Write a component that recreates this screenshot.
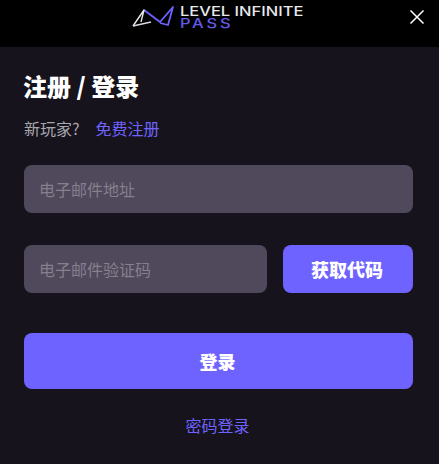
<div class="page">
  <header class="top">
    <div class="logo">
      <svg class="mark" width="43" height="24" viewBox="0 0 43 24" fill="none" aria-hidden="true">
        <path d="M12 5 L28 17 L41 2 L36 20 L28 18" stroke="#6f63ff" stroke-width="1.8" stroke-linejoin="round"/>
        <path d="M1 21 L12 5 L9 17" stroke="#e6e6ea" stroke-width="1.4" stroke-linejoin="round"/>
        <path d="M1 21 L19 17" stroke="#d8d8e0" stroke-width="1.6"/>
      </svg>
      <div class="word">
        <span class="w1">LEVEL INFINITE</span>
        <span class="w2">PASS</span>
      </div>
    </div>
    <button class="close" aria-label="关闭">
      <svg width="16" height="16" viewBox="0 0 16 16" fill="none">
        <path d="M1.5 1.5 L14.5 14.5 M14.5 1.5 L1.5 14.5" stroke="#fff" stroke-width="1.5"/>
      </svg>
    </button>
  </header>

  <main class="body">
    <h1>注册 / 登录</h1>
    <p class="sub"><span>新玩家?</span><a href="#reg">免费注册</a></p>
    <div class="field full">电子邮件地址</div>
    <div class="row">
      <div class="field grow">电子邮件验证码</div>
      <button class="btn code">获取代码</button>
    </div>
    <button class="btn login">登录</button>
    <a class="pw" href="#pw">密码登录</a>
  </main>
</div>

<style>
  :global(body) {
    margin: 0;
    background: #16131c;
  }
  .page {
    width: 439px;
    height: 464px;
    overflow: hidden;
    background: #16131c;
    font-family: "Noto Sans CJK SC", "Noto Sans", sans-serif;
    display: flex;
    flex-direction: column;
  }
  .top {
    height: 47px;
    flex: none;
    background: #000;
    position: relative;
    display: flex;
    justify-content: center;
    align-items: flex-start;
  }
  .logo {
    display: flex;
    align-items: flex-start;
    gap: 5px;
    margin: 3px 4px 0 0;
  }
  .mark {
    margin-top: 2px;
  }
  .word {
    display: flex;
    flex-direction: column;
    font-family: Inter, "Liberation Sans", sans-serif;
    font-weight: 500;
    font-size: 13.5px;
    width: 123px;
  }
  .w1,
  .w2 {
    display: block;
    height: 11px;
    line-height: 11px;
    white-space: nowrap;
    transform-origin: left center;
    transform: scaleX(1.22);
  }
  .w1 {
    color: #e8e8ec;
    margin-top: 3px;
  }
  .w2 {
    color: #6459ea;
    margin-top: 1px;
    letter-spacing: 2.3px;
  }
  .close {
    position: absolute;
    top: 9px;
    right: 14px;
    padding: 0;
    border: 0;
    background: none;
    width: 16px;
    height: 16px;
    display: flex;
  }
  .body {
    padding: 0 26px 0 24px;
    display: flex;
    flex-direction: column;
    align-items: stretch;
  }
  h1 {
    margin: 22px 0 0 -1px;
    font-size: 24px;
    line-height: 34px;
    font-weight: 900;
    color: #fff;
  }
  .sub {
    margin: 13px 0 0;
    font-size: 16px;
    line-height: 24px;
    color: #a9a7ae;
    display: flex;
    gap: 16px;
  }
  .sub a {
    color: #6f63ff;
    text-decoration: none;
  }
  .field {
    height: 48px;
    border-radius: 8px;
    background: #50495b;
    color: #857f8e;
    font-size: 16px;
    line-height: 48px;
    padding-left: 15px;
    box-sizing: border-box;
  }
  .full {
    margin-top: 25px;
  }
  .row {
    margin-top: 32px;
    display: flex;
    gap: 16px;
  }
  .grow {
    flex: 1;
  }
  .btn {
    border: 0;
    border-radius: 8px;
    background: #6f63ff;
    color: #fff;
    font-family: inherit;
    font-weight: 900;
    font-size: 18px;
    padding: 0 2px 0 0;
  }
  .code {
    width: 130px;
    height: 48px;
  }
  .login {
    margin-top: 40px;
    height: 56px;
  }
  .pw {
    margin-top: 22px;
    padding-right: 2px;
    text-align: center;
    font-size: 16px;
    line-height: 28px;
    color: #6f63ff;
    text-decoration: none;
  }
</style>
